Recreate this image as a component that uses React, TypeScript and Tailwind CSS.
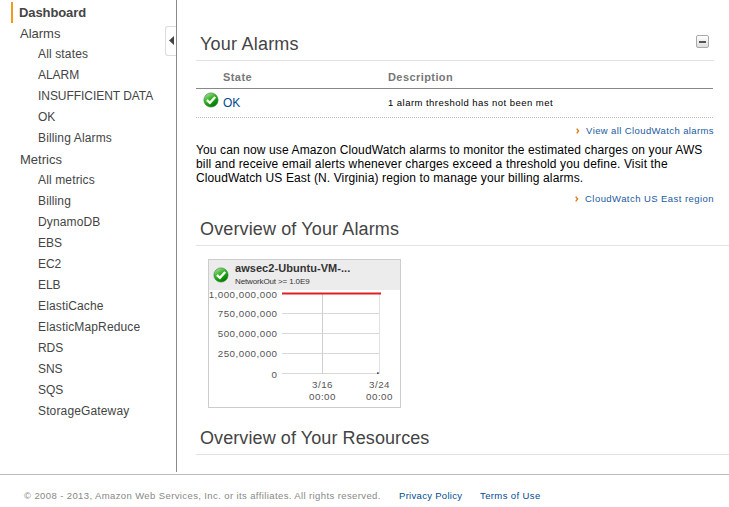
import React from "react";

const ALARM_LINKS = ["All states", "ALARM", "INSUFFICIENT DATA", "OK", "Billing Alarms"];
const METRIC_LINKS = [
  "All metrics",
  "Billing",
  "DynamoDB",
  "EBS",
  "EC2",
  "ELB",
  "ElastiCache",
  "ElasticMapReduce",
  "RDS",
  "SNS",
  "SQS",
  "StorageGateway",
];

function CheckIcon({ id }: { id: string }) {
  return (
    <svg width="16" height="16" viewBox="0 0 16 16" className="shrink-0">
      <defs>
        <linearGradient id={id} x1="0.2" y1="0" x2="0.8" y2="1">
          <stop offset="0" stopColor="#b5dfae" />
          <stop offset="0.4" stopColor="#35b522" />
          <stop offset="0.75" stopColor="#0b9005" />
          <stop offset="1" stopColor="#0a5f08" />
        </linearGradient>
      </defs>
      <circle cx="8" cy="8" r="7.1" fill={`url(#${id})`} stroke="#2c7d28" strokeWidth="0.6" />
      <path d="M3.9 8 6.9 10.8 12.2 5" fill="none" stroke="#fff" strokeWidth="2.4" />
    </svg>
  );
}

function NavGroup({ title, links }: { title: string; links: string[] }) {
  return (
    <>
      <div className="h-[21px] pl-5 text-[13px] leading-[21px]">{title}</div>
      <ul className="pl-[38px] text-xs leading-[21px]">
        {links.map((l) => (
          <li
            key={l}
            className={l === l.toUpperCase() ? "h-[21px] tracking-[-0.05px]" : "h-[21px] tracking-[0.14px]"}
          >
            {l}
          </li>
        ))}
      </ul>
    </>
  );
}

function MoreLink({ children }: { children: React.ReactNode }) {
  return (
    <div className="flex h-4 w-[518px] items-center justify-end text-[9.5px] leading-4 tracking-[0.39px] text-[#1c5aa0]">
      <svg width="4" height="6" viewBox="0 0 4 6" className="mr-[6px]">
        <path d="M0.7 0.7 2.6 3 0.7 5.3" fill="none" stroke="#d9770a" strokeWidth="1.3" />
      </svg>
      <span>{children}</span>
    </div>
  );
}

function AlarmChart() {
  const labels: [string, number][] = [
    ["1,000,000,000", 8],
    ["750,000,000", 27],
    ["500,000,000", 47],
    ["250,000,000", 67],
    ["0", 88],
  ];
  return (
    <svg width="191" height="117" viewBox="0 0 191 117" className="block text-[9.75px] tracking-[0.5px]" fill="#555">
      {[23, 43, 63, 83].map((y) => (
        <rect key={y} x="73" y={y} width="98" height="1" fill="#d8d8d8" />
      ))}
      <rect x="113" y="4" width="1" height="80" fill="#cfcfcf" />
      <rect x="170" y="4" width="1" height="80" fill="#e0e0e0" />
      <rect x="73" y="2.5" width="99" height="2" fill="#e02020" />
      <rect x="168" y="82.3" width="1.7" height="1.7" fill="#444a66" />
      {labels.map(([t, y]) => (
        <text key={t} x="68.5" y={y} textAnchor="end">
          {t}
        </text>
      ))}
      <g textAnchor="middle">
        <text x="113.5" y="98">3/16</text>
        <text x="113.5" y="110">00:00</text>
        <text x="170.5" y="98">3/24</text>
        <text x="170.5" y="110">00:00</text>
      </g>
    </svg>
  );
}

export default function App() {
  return (
    <div className="flex h-[507px] w-[729px] flex-col overflow-hidden bg-white font-['Liberation_Sans',Arial,sans-serif] text-[#444]">
      <div className="flex h-[474px]">
        <nav className="relative h-[472px] w-[177px] shrink-0 border-r border-[#8a8a8a] pt-[2px]">
          <div className="ml-[11px] h-[21px] border-l-2 border-[#f7981d] pl-[6px] text-[13px] leading-[22px] font-bold tracking-[-0.1px]">
            Dashboard
          </div>
          <NavGroup title="Alarms" links={ALARM_LINKS} />
          <NavGroup title="Metrics" links={METRIC_LINKS} />
          <div className="absolute top-[26px] right-0 flex h-[30px] w-[11px] items-center justify-end rounded-l-[3px] border border-r-0 border-[#ddd] bg-white pr-[2px] pb-px">
            <svg width="5" height="9" viewBox="0 0 5 9">
              <path d="M5 0V9L0 4.5Z" fill="#444" />
            </svg>
          </div>
        </nav>

        <main className="ml-[19px] flex w-[533px] shrink-0 flex-col">
          <div className="mt-7 flex h-[33px] w-[518px] items-center justify-between border-b border-[#e2e2e2] pr-[5px] pl-1">
            <h1 className="text-lg leading-8 tracking-[0.22px]">Your Alarms</h1>
            <div className="mb-[5px] flex size-[13px] items-center justify-center rounded-[2px] border border-[#aaa] bg-linear-to-b from-white to-[#ddd]">
              <div className="h-[2px] w-[7px] bg-[#555]" />
            </div>
          </div>
          <div className="flex h-7 w-[517px] items-center border-b border-[#888] pt-[5px] pl-[27px] text-[11px] font-bold tracking-[0.42px] text-[#777]">
            <span className="w-[165px]">State</span>
            <span>Description</span>
          </div>
          <div className="flex h-[29px] w-[517px] items-center border-b border-dotted border-[#bbb] pl-[7px]">
            <div className="mb-[7px]">
              <CheckIcon id="row-ok" />
            </div>
            <span className="ml-1 w-[165px] text-xs text-[#004b91]">OK</span>
            <span className="pt-px text-[9.5px] tracking-[0.46px] text-black">
              1 alarm threshold has not been met
            </span>
          </div>
          <div className="mt-[5px]">
            <MoreLink>View all CloudWatch alarms</MoreLink>
          </div>
          <p className="mt-1 text-xs leading-[14px] tracking-[0.12px] whitespace-nowrap text-black">
            You can now use Amazon CloudWatch alarms to monitor the estimated charges on your AWS
            <br />
            <span className="tracking-[0.15px]">
              bill and receive email alerts whenever charges exceed a threshold you define. Visit the
            </span>
            <br />
            CloudWatch US East (N. Virginia) region to manage your billing alarms.
          </p>
          <div className="mt-[6px]">
            <MoreLink>
              <span className="tracking-[0.44px]">CloudWatch US East region</span>
            </MoreLink>
          </div>
          <h2 className="mt-[6px] h-[33px] border-b border-[#e2e2e2] pl-1 text-lg leading-8 tracking-[0.13px]">
            Overview of Your Alarms
          </h2>
          <section className="mt-[13px] ml-3 h-[149px] w-[193px] border border-[#ccc]">
            <header className="flex h-[30px] items-center bg-[#ececec] pl-1">
              <CheckIcon id="card-ok" />
              <div className="mb-px ml-[6px]">
                <div className="text-[11px] leading-[13px] font-bold tracking-[0.05px] text-[#333]">
                  awsec2-Ubuntu-VM-...
                </div>
                <div className="text-[8px] leading-[13px] tracking-[-0.13px] text-[#333]">
                  NetworkOut &gt;= 1.0E9
                </div>
              </div>
            </header>
            <AlarmChart />
          </section>
          <h2 className="mt-[14px] h-[33px] border-b border-[#e2e2e2] pl-1 text-lg leading-8 tracking-[0.09px]">
            Overview of Your Resources
          </h2>
        </main>
      </div>
      <footer className="flex h-[33px] border-t border-[#bbb] pt-[13px] pl-6 text-[9.5px] leading-4 tracking-[0.39px] whitespace-nowrap">
        <span className="w-[375px] text-[#888]">
          © 2008 - 2013, Amazon Web Services, Inc. or its affiliates. All rights reserved.
        </span>
        <span className="w-[81px] tracking-[0.3px] text-[#004b91]">Privacy Policy</span>
        <span className="text-[#004b91]">Terms of Use</span>
      </footer>
    </div>
  );
}
